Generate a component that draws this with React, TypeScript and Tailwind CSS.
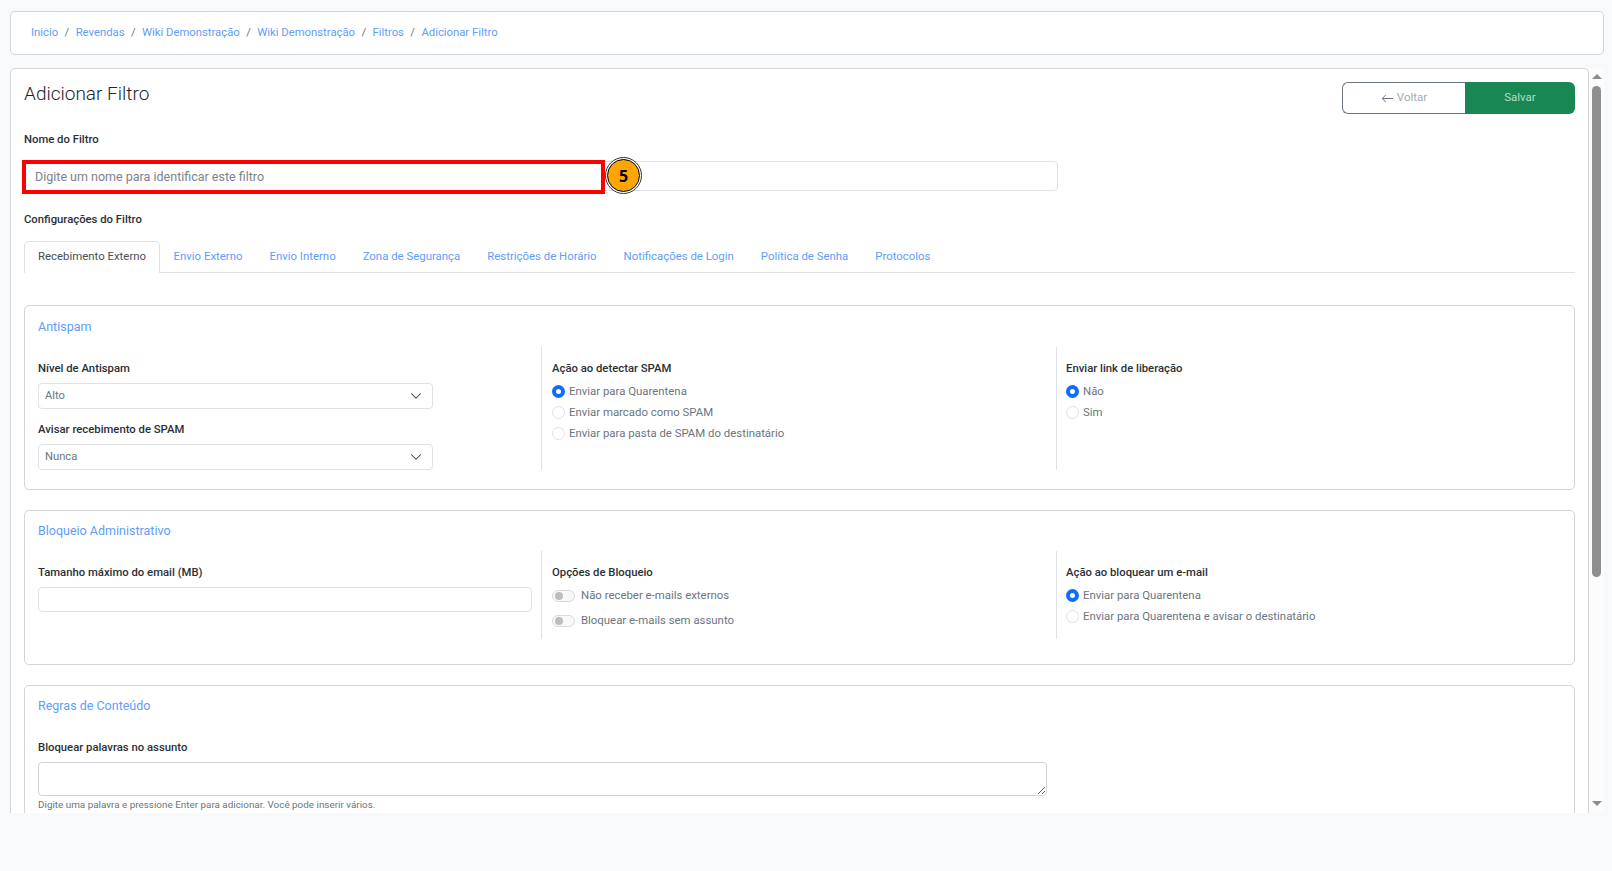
import { BsArrowLeft } from "react-icons/bs";

const crumbs = ["Inicio", "Revendas", "Wiki Demonstração", "Wiki Demonstração", "Filtros", "Adicionar Filtro"];
const tabs = ["Envio Externo", "Envio Interno", "Zona de Segurança", "Restrições de Horário", "Notificações de Login", "Política de Senha", "Protocolos"];

function Label({ children }: { children: string }) {
    return <div className="h-4 pt-[1px] text-[11.3px] leading-4 font-medium text-[#2b3035]">{children}</div>;
}

function SectionTitle({ children }: { children: string }) {
    return <div className="h-4 text-[12.5px] leading-4 text-[#5f9dfb]">{children}</div>;
}

function FakeSelect({ value, className }: { value: string; className: string }) {
    return (
        <div className={`flex h-[26px] w-[395px] items-center justify-between rounded-[4px] border border-[#dee2e6] bg-white pl-[6px] pr-[8px] text-[11.2px] text-[#6c757d] ${className}`}>
            <span>{value}</span>
            <svg width="16" height="12" viewBox="0 0 16 16" fill="none" stroke="#343a40" strokeWidth="1.4" strokeLinecap="round" strokeLinejoin="round">
                <path d="m2 5 6 6 6-6" />
            </svg>
        </div>
    );
}

function Radio({ label, checked }: { label: string; checked?: boolean }) {
    return (
        <div className="flex h-[21px] items-center gap-[4px] text-[11.4px] text-[#6c757d]">
            <span className={`h-[13px] w-[13px] shrink-0 rounded-full bg-white ${checked ? "border-[4px] border-[#0d6efd]" : "border border-[#dee2e6]"}`} />
            <span>{label}</span>
        </div>
    );
}

function Toggle({ label, className }: { label: string; className: string }) {
    return (
        <div className={`flex h-3 items-center gap-[6px] text-[11.4px] text-[#6c757d] ${className}`}>
            <span className="flex h-3 w-[23px] shrink-0 items-center rounded-full border border-[#d8dbde] bg-[#f8f8f8] pl-[2px]">
                <span className="h-2 w-2 rounded-full bg-[#bdbdbd]" />
            </span>
            <span>{label}</span>
        </div>
    );
}

export default function App() {
    return (
        <div className="h-[871px] overflow-hidden bg-[#f8f9fa] pl-[10px] pt-[11px] font-['Roboto',sans-serif]">
            <nav className="flex h-[44px] w-[1594px] items-center gap-[6.4px] rounded-[5px] border border-[#d3d5d7] bg-white pl-[20px] text-[11.3px] text-[#5f9dfb]">
                {crumbs.map((c, i) => (
                    <div key={i} className="flex items-center gap-[6.4px]">
                        {i > 0 && <span className="text-[#6c757d]">/</span>}
                        <span>{c}</span>
                    </div>
                ))}
            </nav>

            <div className="mt-[13px] flex h-[745px] w-[1594px] overflow-hidden">
                <main className="relative h-[800px] w-[1579px] shrink-0 rounded-[5px] border border-[#d3d5d7] bg-white px-[13px] pt-[13px]">
                    <div className="flex items-start justify-between">
                        <h1 className="text-[19px] font-light leading-[24px] text-[#212529]">Adicionar Filtro</h1>
                        <div className="flex h-8 text-[11.5px]">
                            <button className="flex w-[123px] items-center justify-center gap-[3px] rounded-l-[6px] border border-r-0 border-[#6c757d] bg-white pb-[1px] text-[#a4abb3]">
                                <BsArrowLeft className="mt-[2px] text-[13px] text-[#6c757d]" />
                                Voltar
                            </button>
                            <button className="w-[110px] rounded-r-[6px] bg-[#198754] pb-[1px] text-[#b5dcc8]">Salvar</button>
                        </div>
                    </div>

                    <div className="mt-[17px]"><Label>Nome do Filtro</Label></div>
                    <input
                        placeholder="Digite um nome para identificar este filtro"
                        className="mt-[14px] block h-[30px] w-[1034px] rounded-[4px] border border-[#dee2e6] bg-white px-[10px] text-[12.5px] placeholder:text-[#7b838a]"
                    />
                    {/* marcacao do tutorial por cima do campo */}
                    <div className="absolute left-[11px] top-[91px] h-[34px] w-[583px] border-[4px] border-[#ff0000]" />
                    <div className="absolute left-[594px] top-[88px] flex h-[37px] w-[37px] items-center justify-center rounded-full border border-[#333] bg-white">
                        <div className="flex h-[33px] w-[33px] items-center justify-center rounded-full border border-black bg-[#ffa500] font-['Open_Sans',sans-serif] text-[16px] font-bold text-black">
                            5
                        </div>
                    </div>

                    <div className="mt-[20px]"><Label>Configurações do Filtro</Label></div>

                    <div className="mt-[14px] flex h-8 border-b border-[#dee2e6] text-[11.4px]">
                        <div className="-mb-px flex h-8 items-center rounded-t-[5px] border border-b-0 border-[#dee2e6] bg-white px-[13px] pb-[1px] text-[#495057]">Recebimento Externo</div>
                        {tabs.map((t) => (
                            <div key={t} className="flex items-center px-[13.5px] text-[#5f9dfb]">{t}</div>
                        ))}
                    </div>

                    <section className="mt-[32px] rounded-[5px] border border-[#d3d5d7] px-[13px] pb-[20px] pt-[13px]">
                        <SectionTitle>Antispam</SectionTitle>
                        <div className="mt-[12px] grid h-[122px] grid-cols-[504px_515px_1fr]">
                            <div className="border-r border-[#dee2e6] pt-[13px]">
                                <Label>Nível de Antispam</Label>
                                <FakeSelect value="Alto" className="mt-[7px]" />
                                <div className="mt-[12px]"><Label>Avisar recebimento de SPAM</Label></div>
                                <FakeSelect value="Nunca" className="mt-[7px]" />
                            </div>
                            <div className="border-r border-[#dee2e6] pl-[10px] pt-[13px]">
                                <Label>Ação ao detectar SPAM</Label>
                                <div className="mt-[5px]">
                                    <Radio label="Enviar para Quarentena" checked />
                                    <Radio label="Enviar marcado como SPAM" />
                                    <Radio label="Enviar para pasta de SPAM do destinatário" />
                                </div>
                            </div>
                            <div className="pl-[9px] pt-[13px]">
                                <Label>Enviar link de liberação</Label>
                                <div className="mt-[5px]">
                                    <Radio label="Não" checked />
                                    <Radio label="Sim" />
                                </div>
                            </div>
                        </div>
                    </section>

                    <section className="mt-[20px] h-[155px] rounded-[5px] border border-[#d3d5d7] px-[13px] pt-[12px]">
                        <SectionTitle>Bloqueio Administrativo</SectionTitle>
                        <div className="mt-[12px] grid h-[88px] grid-cols-[504px_515px_1fr]">
                            <div className="border-r border-[#dee2e6] pt-[13px]">
                                <Label>Tamanho máximo do email (MB)</Label>
                                <input className="mt-[7px] block h-[25px] w-[494px] rounded-[4px] border border-[#dee2e6] bg-white" />
                            </div>
                            <div className="border-r border-[#dee2e6] pl-[10px] pt-[13px]">
                                <Label>Opções de Bloqueio</Label>
                                <Toggle label="Não receber e-mails externos" className="mt-[10px]" />
                                <Toggle label="Bloquear e-mails sem assunto" className="mt-[13px]" />
                            </div>
                            <div className="pl-[9px] pt-[13px]">
                                <Label>Ação ao bloquear um e-mail</Label>
                                <div className="mt-[5px]">
                                    <Radio label="Enviar para Quarentena" checked />
                                    <Radio label="Enviar para Quarentena e avisar o destinatário" />
                                </div>
                            </div>
                        </div>
                    </section>

                    <section className="mt-[20px] h-[200px] rounded-[5px] border border-[#d3d5d7] px-[13px] pt-[12px]">
                        <SectionTitle>Regras de Conteúdo</SectionTitle>
                        <div className="mt-[25px]"><Label>Bloquear palavras no assunto</Label></div>
                        <textarea className="mt-[7px] block h-[34px] w-[1009px] rounded-[4px] border border-[#ced4da] bg-white" />
                        <div className="mt-[3px] text-[9.9px] leading-[12px] text-[#6c757d]">Digite uma palavra e pressione Enter para adicionar. Você pode inserir vários.</div>
                    </section>
                </main>

                {/* barra de rolagem */}
                <div className="flex w-[15px] shrink-0 flex-col items-center justify-between bg-[#fcfcfc] pb-[7px] pt-[6px]">
                    <div className="flex flex-col items-center gap-[7px]">
                        <span className="h-0 w-0 border-x-[5px] border-b-[5px] border-x-transparent border-b-[#8c8c8c]" />
                        <span className="h-[491px] w-[9px] rounded-full bg-[#8f8f8f]" />
                    </div>
                    <span className="h-0 w-0 border-x-[5px] border-t-[5px] border-x-transparent border-t-[#8c8c8c]" />
                </div>
            </div>
        </div>
    );
}
